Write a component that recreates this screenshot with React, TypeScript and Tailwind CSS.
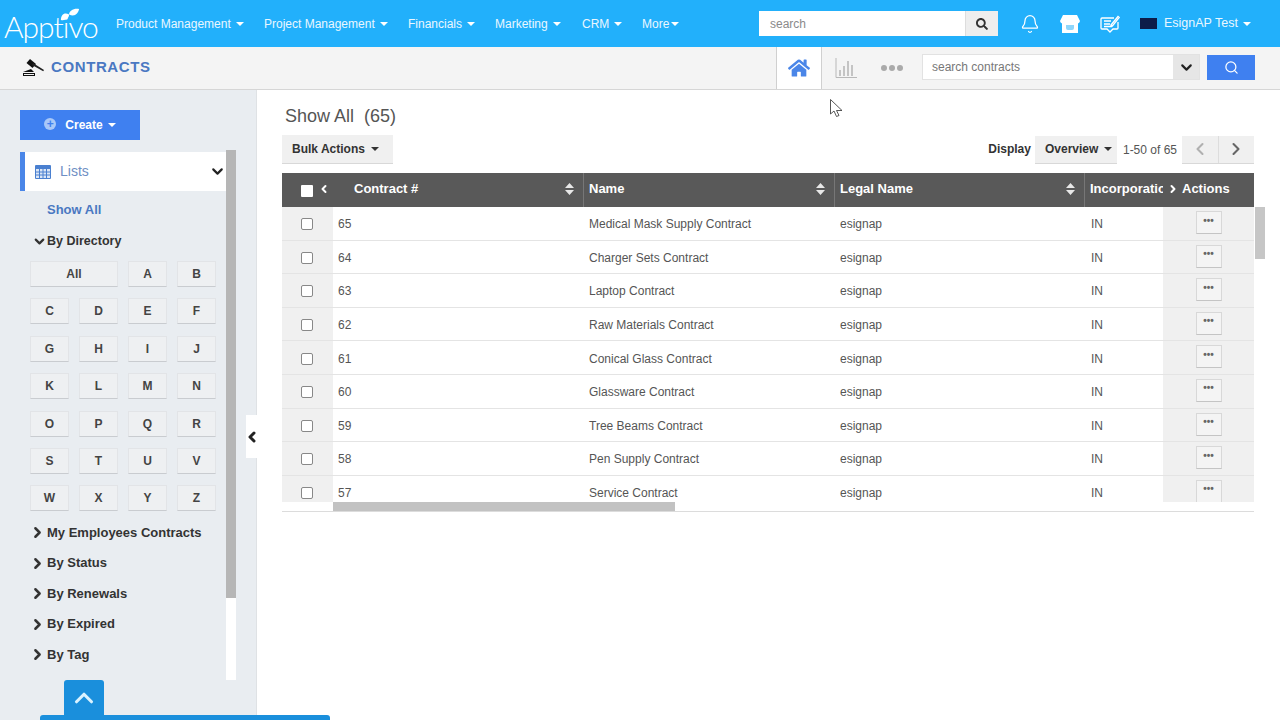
import { Bell, ChevronDown, ChevronLeft, ChevronRight, ChevronUp, Search } from "lucide-react";
import { FaHome, FaSearch } from "react-icons/fa";

const navItems = [
  { label: "Product Management", width: "w-[148px]" },
  { label: "Project Management", width: "w-[144px]" },
  { label: "Financials", width: "w-[87px]" },
  { label: "Marketing", width: "w-[87px]" },
  { label: "CRM", width: "w-[60px]" },
];
const letterRows = [
  ["C", "D", "E", "F"],
  ["G", "H", "I", "J"],
  ["K", "L", "M", "N"],
  ["O", "P", "Q", "R"],
  ["S", "T", "U", "V"],
  ["W", "X", "Y", "Z"],
];
const groups = ["My Employees Contracts", "By Status", "By Renewals", "By Expired", "By Tag"];
const contracts = [
  ["65", "Medical Mask Supply Contract"],
  ["64", "Charger Sets Contract"],
  ["63", "Laptop Contract"],
  ["62", "Raw Materials Contract"],
  ["61", "Conical Glass Contract"],
  ["60", "Glassware Contract"],
  ["59", "Tree Beams Contract"],
  ["58", "Pen Supply Contract"],
  ["57", "Service Contract"],
];

function Caret({ className = "border-t-white" }: { className?: string }) {
  return <span className={`inline-block w-0 h-0 border-x-[4px] border-x-transparent border-t-[4px] ${className}`} />;
}

function SortIcon() {
  return (
    <svg width="9" height="12" viewBox="0 0 9 12" className="shrink-0">
      <path d="M4.5 0L9 5H0zM4.5 12L0 7h9z" fill="#e8e8e8" />
    </svg>
  );
}

function LetterButton({ label, wide }: { label: string; wide?: boolean }) {
  return (
    <button
      className={`h-[26px] flex items-center justify-center bg-[#eef0f2] border border-[#e2e4e7] border-b-[#c9ccd0] text-[12px] font-bold text-[#444] ${wide ? "col-span-2" : ""}`}
    >
      {label}
    </button>
  );
}

function TopBar() {
  return (
    <header className="h-[47px] bg-[#22b0fb] flex items-center text-white shrink-0">
      <div className="relative w-[116px] pl-[4px] h-full flex items-center">
        <span className="font-['Lato',sans-serif] font-light text-[30px] leading-none tracking-[-1px] mt-[5px]">Apptivo</span>
        <svg width="20" height="13" viewBox="0 0 22 14" className="absolute left-[60px] top-[8px]">
          <path d="M1 13C1 7 5 4 10 7C10 11 6 14 1 13z" fill="#fff" />
          <path d="M10 7C10 3 15 0 21 1C20 6 16 10 10 7z" fill="#fff" />
        </svg>
      </div>
      <nav className="flex items-center text-[12px] text-[#eaf7ff] w-[643px]">
        {navItems.map((item) => (
          <span key={item.label} className={`flex items-center gap-[5px] ${item.width}`}>
            {item.label}
            <Caret />
          </span>
        ))}
        <span className="flex items-center gap-[2px]">
          More
          <Caret />
        </span>
      </nav>
      <div className="w-[239px] h-[25px] flex bg-white">
        <span className="flex-1 flex items-center pl-[11px] text-[12px] text-[#8a8a8a]">search</span>
        <span className="w-[33px] bg-[#eeeeee] border-l border-[#dddddd] flex items-center justify-center">
          <FaSearch className="text-[#333] text-[12px]" />
        </span>
      </div>
      <Bell size={20} strokeWidth={1.5} className="ml-[22px]" />
      <svg width="20" height="20" viewBox="0 0 20 20" className="ml-[20px]">
        <path d="M3 1h14l3 6a3 3 0 0 1-2 2.4V19H2V9.4A3 3 0 0 1 0 7z" fill="#fff" />
        <path d="M6 11h8v3a2 2 0 0 1-2 2H8a2 2 0 0 1-2-2z" fill="#8fd6fb" />
      </svg>
      <svg width="20" height="20" viewBox="0 0 20 20" fill="none" stroke="#fff" strokeWidth="1.3" className="ml-[20px]">
        <path d="M14 4H2a1 1 0 0 0-1 1v9a1 1 0 0 0 1 1h5l3 3 3-3h4a1 1 0 0 0 1-1V8" />
        <path d="M4 7h7M4 10h6M4 12.5h8M11 11l7-8.5 1.2 1L12.500 12z" />
      </svg>
      <span className="ml-[20px] w-[17px] h-[11px] bg-[#0c1c4a]" />
      <span className="ml-[7px] text-[12.500px] text-[#eaf7ff]">EsignAP Test</span>
      <Caret className="border-t-white ml-[5px]" />
    </header>
  );
}

function SubBar() {
  return (
    <div className="h-[43px] bg-[#f4f4f4] border-b border-[#d6d6d6] flex items-stretch shrink-0">
      <div className="w-[776px] flex items-center pl-[23px] pb-[2px]">
        <svg width="23" height="18" viewBox="0 0 23 18">
          <path d="M7 1l6 5-3.500 4-6-5z" fill="#111" />
          <path d="M10 5l11 7-.8 1.200L9 7z" fill="#222" />
          <path d="M0 14l8-3 3 3z" fill="#111" />
          <rect x="0.500" y="15.500" width="11" height="2" fill="none" stroke="#111" />
        </svg>
        <span className="ml-[5px] text-[15px] font-bold text-[#4a78c2] tracking-[0.6px]">CONTRACTS</span>
      </div>
      <div className="w-[46px] bg-white border-x border-[#d0d0d0] flex items-center justify-center">
        <FaHome className="text-[#4a86e8] text-[22px]" />
      </div>
      <div className="w-[100px] flex items-center pl-[13px] pb-[1px]">
        <svg width="22" height="22" viewBox="0 0 22 22" fill="none" stroke="#b8b8b8">
          <path d="M1 1v19.500h21" />
          <path d="M5 19v-6M9 19V9M13 19V4M17 19V8" strokeWidth="1.600" />
        </svg>
        <svg width="22" height="6" viewBox="0 0 22 6" className="ml-[24px]" fill="#aaaaaa">
          <circle cx="3" cy="3" r="3" />
          <circle cx="11" cy="3" r="3" />
          <circle cx="19" cy="3" r="3" />
        </svg>
      </div>
      <div className="flex items-center pb-[2px]">
        <div className="w-[278px] h-[26px] flex bg-white border border-[#e2e2e2]">
          <span className="flex-1 flex items-center pl-[9px] text-[12px] text-[#777]">search contracts</span>
          <span className="w-[26px] bg-[#e6e6e6] flex items-center justify-center">
            <ChevronDown size={17} strokeWidth={3} className="text-[#222]" />
          </span>
        </div>
        <button className="ml-[7px] w-[48px] h-[25px] bg-[#3f80f0] flex items-center justify-center">
          <Search size={15} className="text-white" />
        </button>
      </div>
    </div>
  );
}

function Sidebar() {
  return (
    <aside className="w-[257px] h-full shrink-0 bg-[#e9edf1] border-r border-[#dfe2e5] pt-[20px] overflow-hidden">
      <button className="ml-[20px] w-[120px] h-[30px] bg-[#3f80f0] flex items-center justify-center text-white text-[12px] font-bold">
        <span className="w-[12px] h-[12px] rounded-full bg-[#a9c8f8] text-[#3f80f0] text-[12px] leading-[12px] flex items-center justify-center mr-[9px] mb-[3px]">+</span>
        Create
        <Caret className="border-t-white ml-[5px]" />
      </button>
      <div className="mt-[10px] h-[530px] flex overflow-hidden">
        <div className="ml-[20px] w-[206px] pt-[2px]">
          <div className="h-[39px] bg-white border-l-[5px] border-[#4a86e8] flex items-center pl-[10px]">
            <svg width="16" height="14" viewBox="0 0 16 14">
              <rect width="16" height="14" rx="1" fill="#4a80d0" />
              <path d="M1 4h14v9H1z" fill="#dbe6f6" />
              <path d="M1 7h14M1 10h14M4.500 4v9M8 4v9M11.500 4v9" stroke="#4a80d0" />
            </svg>
            <span className="ml-[9px] text-[14px] text-[#6f8fc4]">Lists</span>
            <ChevronDown size={17} strokeWidth={3} className="ml-auto text-[#222]" />
          </div>
          <div className="mt-[11px] ml-[27px] h-[16px] flex items-center text-[13px] font-bold text-[#4a78c2]">Show All</div>
          <div className="mt-[15px] ml-[12px] h-[16px] flex items-center text-[12.500px] font-bold text-[#333]">
            <ChevronDown size={15} strokeWidth={3.500} className="text-[#333]" />
            By Directory
          </div>
          <div className="mt-[12px] ml-[10px] w-[186px] grid grid-cols-4 gap-x-[10px] gap-y-[11.400px]">
            <LetterButton label="All" wide />
            <LetterButton label="A" />
            <LetterButton label="B" />
            {letterRows.flat().map((l) => (
              <LetterButton key={l} label={l} />
            ))}
          </div>
          <div className="mt-[6px] ml-[9px]">
            {groups.map((g) => (
              <div key={g} className="h-[30.500px] flex items-center text-[13px] font-bold text-[#333]">
                <ChevronRight size={17} strokeWidth={3.500} className="text-[#333] mr-[1px]" />
                {g}
              </div>
            ))}
            <div className="h-[30.500px] flex items-center">
              <ChevronRight size={17} strokeWidth={3.500} className="text-[#333]" />
            </div>
          </div>
        </div>
        <div className="w-[10px] bg-white">
          <div className="h-[448px] bg-[#b6b6b6]" />
        </div>
      </div>
    </aside>
  );
}

function ContractsTable() {
  return (
    <div className="mt-[9px] ml-[25px] w-[972px] relative">
      <div className="h-[34px] bg-[#595959] grid grid-cols-[51px_251px_251px_250px_78px_91px] items-center text-[13px] font-bold text-white">
        <div className="flex items-center pl-[19px] gap-[5px]">
          <span className="w-[12px] h-[12px] bg-white mt-[2px] rounded-[1px]" />
          <ChevronLeft size={12} strokeWidth={4} className="mb-[2px]" />
        </div>
        <div className="flex items-center justify-between pl-[21px] pr-[9px] pb-[2px] border-r border-[#777] h-full">
          Contract #
          <SortIcon />
        </div>
        <div className="flex items-center justify-between pl-[5px] pr-[9px] pb-[2px] border-r border-[#777] h-full">
          Name
          <SortIcon />
        </div>
        <div className="flex items-center justify-between pl-[5px] pr-[9px] pb-[2px] border-r border-[#777] h-full">
          Legal Name
          <SortIcon />
        </div>
        <div className="pl-[5px] pb-[2px] overflow-hidden whitespace-nowrap">Incorporation</div>
        <div className="flex items-center pl-[4px] pb-[2px] gap-[3px]">
          <ChevronRight size={12} strokeWidth={4} />
          Actions
        </div>
      </div>
      <div className="h-[295px] overflow-hidden">
        {contracts.map(([id, name]) => (
          <div
            key={id}
            className="h-[33.600px] grid grid-cols-[51px_251px_251px_250px_78px_91px] items-stretch text-[12px] text-[#555]"
          >
            <div className="bg-[#f0f0f0] border-b border-[#e4e4e4] flex items-center pl-[19px] pt-[2px]">
              <span className="w-[12px] h-[12px] bg-white border border-[#888] rounded-[2px]" />
            </div>
            <div className="border-b border-[#e4e4e4] flex items-center pl-[5px] pt-[2px]">{id}</div>
            <div className="border-b border-[#e4e4e4] flex items-center pl-[5px] pt-[2px]">{name}</div>
            <div className="border-b border-[#e4e4e4] flex items-center pl-[5px] pt-[2px]">esignap</div>
            <div className="border-b border-[#e4e4e4] flex items-center pl-[6px] pt-[2px]">IN</div>
            <div className="bg-[#f0f0f0] border-b border-[#e4e4e4] flex justify-center pt-[4px]">
              <span className="w-[26px] h-[23px] bg-[#f4f4f4] border border-[#d8d8d8] border-b-[#c4c4c4] flex items-center justify-center text-[#666] text-[10px] font-bold leading-none pb-[4px]">
                •••
              </span>
            </div>
          </div>
        ))}
      </div>
      <div className="h-[10px] border-b border-[#dcdcdc] pl-[51px]">
        <div className="w-[342px] h-full bg-[#c2c2c2]" />
      </div>
      <div className="absolute left-[973px] top-[34px] w-[10px] h-[52px] bg-[#c6c6c6]" />
    </div>
  );
}

function MainPanel() {
  return (
    <main className="flex-1 bg-white min-w-0">
      <div className="pt-[15px] pl-[28px] text-[18px] leading-[22px] text-[#555] whitespace-pre">Show All  (65)</div>
      <div className="mt-[8px] ml-[25px] w-[972px] h-[29px] flex items-center text-[12px]">
        <button className="w-[111px] h-[29px] pl-[10px] bg-[#f0f0f0] border-b border-[#d8d8d8] flex items-center gap-[6px] font-bold text-[#333]">
          Bulk Actions
          <Caret className="border-t-[#333]" />
        </button>
        <span className="ml-auto font-bold text-[#333] mb-[2px]">Display</span>
        <button className="ml-[4px] w-[82px] h-[28px] pl-[10px] bg-[#f0f0f0] border-b border-[#d8d8d8] flex items-center gap-[6px] font-bold text-[#333]">
          Overview
          <Caret className="border-t-[#333]" />
        </button>
        <span className="ml-[6px] text-[#555]">1-50 of 65</span>
        <div className="ml-[5px] flex h-[28px] w-[72px] bg-[#f0f0f0] border-b border-[#d8d8d8]">
          <span className="flex-1 border-r border-[#dddddd] flex items-center justify-center">
            <ChevronLeft size={20} strokeWidth={2.500} className="text-[#b0b0b0]" />
          </span>
          <span className="flex-1 flex items-center justify-center">
            <ChevronRight size={20} strokeWidth={2.500} className="text-[#666]" />
          </span>
        </div>
      </div>
      <ContractsTable />
    </main>
  );
}

export default function App() {
  return (
    <div className="relative w-[1280px] h-[720px] overflow-hidden flex flex-col bg-white font-['Liberation_Sans',Arial,sans-serif]">
      <TopBar />
      <SubBar />
      <div className="flex flex-1 min-h-0">
        <Sidebar />
        <MainPanel />
      </div>
      {/* collapse handle */}
      <div className="absolute left-[246px] top-[415px] w-[11px] h-[43px] bg-white flex items-center justify-center">
        <ChevronLeft size={16} strokeWidth={4.500} className="text-[#222] shrink-0" />
      </div>
      {/* scroll-to-top tab and the bar it sits on */}
      <div className="absolute left-[64px] top-[680px] w-[40px] h-[36px] bg-[#1a8fdc] rounded-t-[3px] flex items-center justify-center">
        <ChevronUp size={30} strokeWidth={2.500} className="text-[#d9f2ff]" />
      </div>
      <div className="absolute left-[40px] top-[715px] w-[290px] h-[5px] bg-[#1a8fdc] rounded-t-[3px]" />
      {/* mouse pointer */}
      <svg width="14" height="20" viewBox="0 0 14 20" className="absolute left-[830px] top-[99px]">
        <path d="M0.500 0.500V15L4 12l2.500 5.500 2.500-1L6.500 11.500H12z" fill="#fff" stroke="#444" strokeWidth="0.900" />
      </svg>
    </div>
  );
}
